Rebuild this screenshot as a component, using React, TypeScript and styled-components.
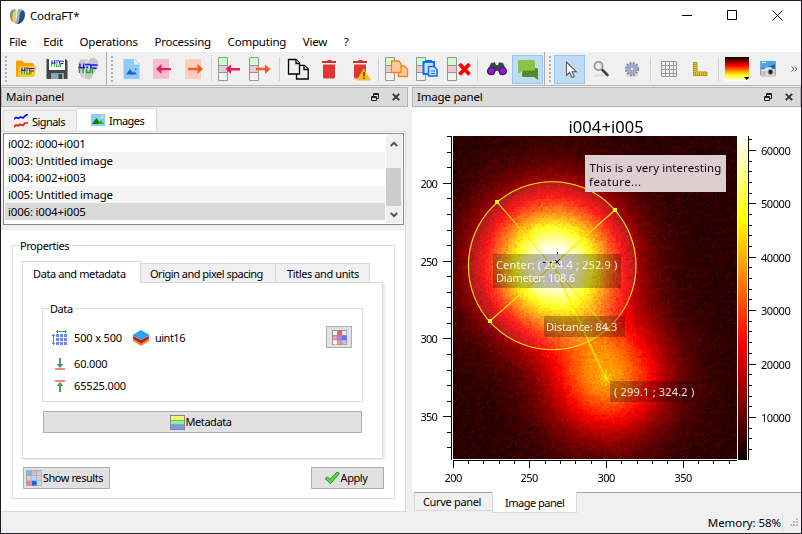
import React, { useLayoutEffect, useRef } from 'react';
import styled, { createGlobalStyle, css } from 'styled-components';

const Global = createGlobalStyle`
  * { box-sizing: border-box; }
  html, body { margin: 0; padding: 0; }
  body { width: 802px; height: 534px; overflow: hidden; background: #fff; }
`;

const small = css`
  font-size: 11px;
  letter-spacing: -0.43px;
`;

const Window = styled.div`
  display: flex;
  flex-direction: column;
  width: 802px;
  height: 534px;
  border: 1px solid #1e1c20;
  border-bottom-color: #26282b;
  background: #f0f0f0;
  color: #000;
  font: 11.5px/16px 'Noto Sans', 'Open Sans', sans-serif;
  letter-spacing: -0.2px;
  white-space: nowrap;
  overflow: hidden;
`;

/* ---------- title and menu ---------- */
const TitleBar = styled.header`
  display: flex;
  align-items: center;
  height: 30px;
  flex: none;
  padding: 0 18px 0 8px;
  background: #fff;
`;
const AppName = styled.span`
  flex: 1;
  padding: 0 0 0 4px;
`;
const WindowControls = styled.div`
  display: flex;
  gap: 34px;
  margin-top: -1px;
`;
const MenuBar = styled.nav`
  display: flex;
  align-items: center;
  gap: 16.6px;
  height: 21px;
  flex: none;
  padding: 0 0 0 8px;
  background: #fff;
`;
const MenuItem = styled.span``;

/* ---------- toolbars ---------- */
const ToolBars = styled.div`
  display: flex;
  flex: none;
  height: 34px;
  border-bottom: 1px solid #b3b3b3;
  background: #f0f0f0;
`;
const ToolGroup = styled.div<{ $w?: number }>`
  display: flex;
  align-items: center;
  ${p => (p.$w ? `width: ${p.$w}px;` : 'flex: 1;')}
  ${p => p.$w && 'border-right: 1px solid #adadad;'}
  padding-top: 1px;
`;
const Grip = styled.div`
  width: 9px;
  height: 26px;
  flex: none;
  background: radial-gradient(circle at 1px 1px, #b0b0b0 1px, transparent 1.3px) 4px 0 / 10px 4px repeat-y;
`;
const ToolButton = styled.div<{ $on?: boolean }>`
  display: flex;
  align-items: center;
  justify-content: center;
  width: 31px;
  height: 29px;
  flex: none;
  border: 1px solid ${p => (p.$on ? '#90c8f6' : 'transparent')};
  background: ${p => (p.$on ? '#c0dcf3' : 'transparent')};
`;
const Divider = styled.div<{ $w?: number }>`
  display: flex;
  justify-content: center;
  width: ${p => p.$w ?? 6}px;
  height: 24px;
  flex: none;
  &::after {
    content: '';
    width: 1px;
    background: #cfcfcf;
  }
`;
const Overflow = styled.span`
  display: flex;
  margin: 0 0 0 8px;
`;

/* ---------- docks ---------- */
const Docks = styled.main`
  display: grid;
  grid-template-columns: 407px 389px;
  column-gap: 4px;
  height: 425px;
  flex: none;
  padding-top: 1px;
`;
const Dock = styled.section`
  display: flex;
  flex-direction: column;
  min-width: 0;
`;
const DockTitle = styled.div`
  display: flex;
  align-items: center;
  gap: 12px;
  height: 20px;
  flex: none;
  padding: 0 7px 0 4px;
  border: 1px solid #b5b5b5;
  background: #dadada;
`;
const DockName = styled.span`
  flex: 1;
`;

const PanelTabs = styled.div`
  display: flex;
  align-items: flex-end;
  height: 23px;
  flex: none;
  padding: 0 0 0 2px;
  margin-top: 1px;
`;
const PanelTab = styled.div<{ $on?: boolean; $w: number }>`
  ${small}
  display: flex;
  align-items: center;
  gap: 4px;
  width: ${p => p.$w}px;
  height: ${p => (p.$on ? 23 : 21)}px;
  letter-spacing: -0.55px;
  padding: 1px 0 0 ${p => (p.$on ? 14 : 10)}px;
  border: 1px solid #d9d9d9;
  border-bottom: 0;
  ${p => p.$on && 'border-left: 0;'}
  background: ${p => (p.$on ? '#fff' : '#f0f0f0')};
`;
const PanelBody = styled.div`
  width: 405px;
  height: 381px;
  border: 1px solid #d9d9d9;
  border-left: 0;
  padding: 1px 1px 0 0;
  background: #fff;
`;
const ListFrame = styled.div`
  height: 97px;
  padding-left: 2px;
  background: #efefef;
`;
const ListBox = styled.div`
  display: flex;
  justify-content: space-between;
  width: 401px;
  height: 92px;
  padding: 1px 1px 1px 1px;
  border: 1px solid #828790;
  background: #fff;
`;
const Rows = styled.div`
  width: 380px;
`;
const Row = styled.div<{ $bg: string }>`
  height: 17px;
  padding-left: 3px;
  line-height: 17px;
  background: ${p => p.$bg};
`;
const ScrollBar = styled.div`
  display: flex;
  flex-direction: column;
  align-items: center;
  width: 16px;
  height: 88px;
  background: #f0f0f0;
`;
const ScrollArrow = styled.div`
  display: flex;
  align-items: center;
  justify-content: center;
  height: 17px;
`;
const Thumb = styled.div`
  width: 15px;
  height: 38px;
  margin-top: 16px;
  align-self: flex-start;
  background: #cdcdcd;
`;

/* ---------- properties ---------- */
const Group = styled.fieldset<{ $kind: 'outer' | 'inner' }>`
  ${small}
  display: flex;
  flex-direction: column;
  min-width: 0;
  margin: ${p => (p.$kind === 'outer' ? '7px 0 0 11px' : '0 0 0 19px')};
  width: ${p => (p.$kind === 'outer' ? 383 : 321)}px;
  height: ${p => (p.$kind === 'outer' ? 262 : 102)}px;
  padding: 0 9px;
  border: 1px solid #dcdcdc;
`;
const Legend = styled.legend`
  height: 17px;
  line-height: 17px;
  margin-left: -2px;
  padding: 0 2px 0 0;
`;
const OuterLegend = styled(Legend)`
  padding: 0 3px 0 0;
`;
const InnerTabs = styled.div`
  display: flex;
  align-items: flex-end;
  height: 20px;
  margin-top: 8px;
  flex: none;
`;
const InnerTab = styled.div<{ $on?: boolean; $w: number; $pad: number; $track?: number }>`
  width: ${p => p.$w}px;
  height: ${p => (p.$on ? 22 : 19)}px;
  ${p => p.$on && 'margin-bottom: -1px; z-index: 1;'}
  padding: ${p => (p.$on ? 4 : 2)}px 0 0 ${p => p.$pad}px;
  border: 1px solid #d9d9d9;
  border-bottom: 0;
  ${p => !p.$on && 'border-left: 0;'}
  background: ${p => (p.$on ? '#fff' : '#f0f0f0')};
  letter-spacing: ${p => p.$track ?? -0.4}px;
  line-height: 15px;
`;
const InnerPane = styled.div`
  display: flex;
  flex-direction: column;
  width: 361px;
  height: 177px;
  flex: none;
  padding-top: 17px;
  border: 1px solid #d9d9d9;
  box-shadow: 2px 1px 0 #efefef;
`;
const DataGrid = styled.div`
  display: flex;
  justify-content: space-between;
  padding-top: 9px;
`;
const Facts = styled.div`
  display: flex;
  flex-direction: column;
`;
const Fact = styled.div<{ $h: number }>`
  display: flex;
  align-items: center;
  height: ${p => p.$h}px;
`;
const FactIcon = styled.span`
  display: flex;
  justify-content: center;
  width: 16px;
  margin-right: 6px;
`;
const FactText = styled.span<{ $track?: number }>`
  letter-spacing: ${p => p.$track ?? -0.15}px;
  margin-right: 11px;
`;
const Button = styled.div<{ $w: number; $shift?: number }>`
  ${small}
  display: flex;
  align-items: center;
  justify-content: center;
  gap: 1px;
  width: ${p => p.$w}px;
  height: 22px;
  flex: none;
  padding-right: ${p => p.$shift ?? 0}px;
  border: 1px solid #adadad;
  background: #e1e1e1;
`;
const MetadataRow = styled.div`
  padding: 9px 0 0 20px;
`;
const Actions = styled.div`
  display: flex;
  justify-content: space-between;
  padding: 8px 1px 0 1px;
`;
const TableButton = styled(Button)`
  margin-right: 1px;
`;

/* ---------- plot ---------- */
const Plot = styled.div`
  display: grid;
  width: 389px;
  height: 384px;
  margin-top: 1px;
  flex: none;
  background: #fff;
  > * { grid-area: 1 / 1; }
`;
const Heat = styled.canvas`
  display: block;
  margin: 28px 0 0 41px;
`;
const Overlay = styled.svg`
  display: block;
  z-index: 1;
`;
const BottomTabs = styled.div`
  display: flex;
  align-items: flex-start;
  height: 21px;
  flex: none;
  padding-left: 2px;
`;
const BottomTab = styled.div<{ $on?: boolean; $w: number }>`
  ${small}
  width: ${p => p.$w}px;
  height: ${p => (p.$on ? 21 : 19)}px;
  padding: ${p => (p.$on ? 3 : 1)}px 0 0 ${p => (p.$on ? 12 : 8)}px;
  border: 1px solid #d9d9d9;
  border-top: ${p => (p.$on ? '0' : '1px solid #a0a0a0')};
  ${p => !p.$on && 'border-right: 0;'}
  background: ${p => (p.$on ? '#fff' : '#f0f0f0')};
  letter-spacing: ${p => (p.$on ? -0.5 : -0.33)}px;
`;
const TabFill = styled.div`
  flex: 1;
  height: 1px;
  background: #a0a0a0;
`;
const StatusBar = styled.footer`
  display: flex;
  flex: 1;
  align-items: center;
  justify-content: flex-end;
  padding: 0 2px 0 0;
`;
const Memory = styled.span`
  padding: 2px 1px 0 0;
  border-right: 1px solid #d9d9d9;
  margin-right: 6px;
  letter-spacing: -0.08px;
`;

/* ---------- icons ---------- */
const Hdf = ({ x, y, s = 1 }: { x: number; y: number; s?: number }) => (
  <g transform={`translate(${x} ${y}) scale(${s})`} fill="none" strokeWidth="1.500">
    <path d="M1.500 0v5M5.500 0v5M0 4.500h7M7 1h5.500M9 3v2M13 1v4M13.500 1.500H20M14 5h5" stroke="#1414ee" />
    <path d="M1 5v5M5 5v5M8.500 5.500v4h3.500L13 5M14.500 5v5.500" stroke="#21a336" />
  </g>
);
const Logo = () => (
  <svg width="17" height="17" viewBox="0 0 17 17">
    <path d="M1 5Q2 1 5.500 1.200Q8 2 6.500 5L5.500 12Q5 15 3 13.500Q0 10 1 5" fill="#7d93ad" />
    <path d="M4 5Q5 2 8 3Q6.800 6 7 11Q7 14 5 15Q2 12 4 5" fill="#f3d04c" />
    <path d="M9 1Q13 0 13.500 2.500Q10.500 6 10.500 10Q10 14 8 16Q5.500 16 6 14Q8 11 8 6Z" fill="#a3afbd" />
    <path d="M14 2Q17 4 15.500 10Q13 16 8 16Q10.500 13 10.500 8Q11 3 14 2" fill="#234b8f" />
  </svg>
);
const FolderIcon = () => (
  <svg width="24" height="24" viewBox="0 0 24 24">
    <path d="M2 5q0-1.500 1.500-1.500H8L10.500 6H18q2 0 2 2v12H2z" fill="#ffa000" />
    <path d="M5 10q.4-1 1.500-1H21q1.500 0 1.300 1.500L20.500 19q-.3 1-1.500 1H3.200z" fill="#ffca28" />
    <Hdf x={7} y={10.5} s={0.68} />
  </svg>
);
const SaveIcon = () => (
  <svg width="24" height="24" viewBox="0 0 24 24">
    <path d="M1.500 2h19L22.500 4v18h-21z" fill="#454545" />
    <path d="M4 2h16v11H4z" fill="#fff" />
    <Hdf x={6} y={3.2} s={0.66} />
    <path d="M6 16h13v6H6z" fill="#90a4ae" />
    <path d="M13.500 17h3.500v5h-3.500z" fill="#37474f" />
  </svg>
);
const HdfIcon = () => (
  <svg width="24" height="24" viewBox="0 0 24 24">
    <path d="M2 11Q1 3 7 2Q12 1 12 5Q14 0 18 1Q24 3 22 10Q20 14 17 17Q16 24 11 22Q4 22 2 11" fill="#c9c9c9" />
    <path d="M7 2Q12 2 10 9Q7 15 9 22" fill="none" stroke="#e7e7e7" />
    <Hdf x={2.5} y={6.5} s={0.95} />
  </svg>
);
const ImageFileIcon = () => (
  <svg width="24" height="24" viewBox="0 0 24 24">
    <path d="M3.500 2h10.800L19.500 7v15h-16z" fill="#90caf9" />
    <path d="M14 2.200V7.500h5.200z" fill="#e1f5fe" />
    <path d="M6 17.500L10 12l4 5.500z" fill="#1565c0" />
    <path d="M11.500 17.500l3-3.500 2.500 3.500z" fill="#1976d2" />
    <path d="M15 11.500h1.500V13h-1.500z" fill="#1976d2" />
  </svg>
);
const ArrowBox = ({ back }: { back?: boolean }) => (
  <svg width="24" height="24" viewBox="0 0 24 24">
    <path d={back ? 'M2 2h16v20H2z' : 'M3 2h16v20H3z'} fill={back ? '#f8bbd0' : '#ffccbc'} />
    {back ? (
      <path d="M5 12l5.500-5v4H20v2.300h-9.500V17z" fill="#e91e63" />
    ) : (
      <path d="M21 12l-5.500-5v3.700H6v2.600h9.500V17z" fill="#ff5722" />
    )}
  </svg>
);
const CellsIcon = ({ children }: { children: React.ReactNode }) => (
  <svg width="24" height="24" viewBox="0 0 24 24">
    <g stroke="#959595">
      <path d="M.500.500h9v8h-9z" fill="#ccffcc" />
      <path d="M.500 8.500h9v7h-9z" fill="#e9cccc" />
      <path d="M.500 15.500h9v8h-9z" fill="#f2f2f2" />
    </g>
    {children}
  </svg>
);
const CopyIcon = () => (
  <svg width="24" height="24" viewBox="0 0 24 24" fill="#f0f0f0" stroke="#000" strokeWidth="1.300">
    <path d="M10.500 9.500V22h11.700v-10L18.500 8.300H10.500z" />
    <path d="M18 8.500v4h4" />
    <path d="M2.500 2.500v14.500h11V6L10 2.500z" />
    <path d="M10 2.500v4h3.500" />
  </svg>
);
const TrashIcon = ({ warn }: { warn?: boolean }) => (
  <svg width="24" height="24" viewBox="0 0 24 24">
    <path d="M6 7.500h12V20q0 1.500-1.500 1.500h-9q-1.500 0-1.500-1.500z" fill="#e23432" />
    <path d="M5 4h5l1-1h3l1 1h4v2H5z" fill="#d32f2f" />
    {warn && (
      <g>
        <path d="M15.700 11.500L23 23.500H8.500z" fill="#ffc107" />
        <path d="M15.200 15h1.500v4.500h-1.500zM15.200 20.500h1.500V22h-1.500z" fill="#4e342e" />
      </g>
    )}
  </svg>
);
const BinocularsIcon = () => (
  <svg width="24" height="24" viewBox="0 0 24 24">
    <path d="M6 6l4-.8L11 8h2l1-2.800 4 .8 4 8.500q0 3-4 3.500h-3l-1.500-4h-3L9 18H6q-4-.500-4-3.500z" fill="#37474f" />
    <circle cx="6.300" cy="14" r="4.200" fill="#263238" /><circle cx="17.700" cy="14" r="4.200" fill="#263238" />
    <circle cx="6.300" cy="14" r="3" fill="#aa00ff" /><circle cx="17.700" cy="14" r="3" fill="#aa00ff" />
  </svg>
);
const ChatIcon = () => (
  <svg width="24" height="24" viewBox="0 0 24 24">
    <path d="M6.500 11h14q1.500 0 1.500 1.500V23l-4-3H7.500q-1.500 0-1.500-1.500z" fill="#558b2f" />
    <path d="M3.500 3h14Q19 3 19 4.500V12q0 1.500-1.500 1.500h-11L2 17V4.500Q2 3 3.500 3" fill="#8bc34a" />
  </svg>
);
const PointerIcon = () => (
  <svg width="24" height="24" viewBox="0 0 24 24">
    <path d="M8.500 5v13.500l3-3 2.500 5 2.400-1.200-2.300-4.600h4.200z" fill="#fff" stroke="#585868" strokeWidth="1.100" />
  </svg>
);
const ZoomIcon = () => (
  <svg width="24" height="24" viewBox="0 0 24 24">
    <ellipse cx="11" cy="18.500" rx="6" ry="1.300" fill="#dedede" />
    <path d="M13 12.500l5.500 5.500" stroke="#444" strokeWidth="2.600" strokeLinecap="round" />
    <circle cx="9.500" cy="9" r="4.100" fill="#e6e9ec" stroke="#969696" strokeWidth="1.700" />
  </svg>
);
const GearIcon = () => (
  <svg width="24" height="24" viewBox="0 0 24 24">
    <ellipse cx="12" cy="18.800" rx="6" ry="1" fill="#d2d2d2" />
    <circle cx="12" cy="12" r="5.800" fill="none" stroke="#7f87a0" strokeWidth="2.600" strokeDasharray="1.900 1.137" />
    <circle cx="12" cy="12" r="4" fill="none" stroke="#a0a8c4" strokeWidth="3" />
    <circle cx="12" cy="12" r="2.100" fill="#e6e8f2" stroke="#7279a0" strokeWidth=".9" />
  </svg>
);
const GridIcon = () => (
  <svg width="24" height="24" viewBox="0 0 24 24" fill="none" stroke="#999">
    <path d="M4.500 4.500h15v15h-15zM8.500 4.500v15M12.500 4.500v15M16.500 4.500v15M4.500 8.500h15M4.500 12.500h15M4.500 16.500h15" />
  </svg>
);
const RulerIcon = () => (
  <svg width="24" height="24" viewBox="0 0 24 24">
    <path d="M5.500 5.500h3.500v9.500h10v3.500H5.500z" fill="#e3bf3a" stroke="#b8901a" />
    <path d="M7 7v10h11" fill="none" stroke="#a07d10" strokeDasharray="1 1" />
  </svg>
);
const ColormapIcon = () => (
  <svg width="24" height="24" viewBox="0 0 24 24">
    <defs>
      <linearGradient id="cm" x2="0" y2="1">
        <stop offset="0" stopColor="#0a0000" /><stop offset=".36" stopColor="#f00" />
        <stop offset=".75" stopColor="#ff0" /><stop offset="1" stopColor="#fff" />
      </linearGradient>
    </defs>
    <path d="M0 0h24v24H0z" fill="url(#cm)" />
    <path d="M19 20h5.500l-2.700 3z" />
  </svg>
);
const CameraIcon = () => (
  <svg width="24" height="24" viewBox="0 0 24 24">
    <path d="M4.500 4h15v14h-15z" fill="#1769b5" />
    <path d="M4.500 4h15v3L4.500 12z" fill="#4aa6e6" />
    <path d="M5 12h3.500l1.500-2h5l1.500 2h2.500v7H5z" fill="#e6e6e6" stroke="#9b9b9b" strokeWidth=".6" />
    <path d="M5 14h5v4H5z" fill="#c3c3c3" />
    <circle cx="14.500" cy="15" r="3" fill="#999" /><circle cx="14.500" cy="15" r="1.900" fill="#1a1a1a" />
    <path d="M6 5h4v1H6z" fill="#fff" />
  </svg>
);
const RestoreIcon = () => (
  <svg width="9" height="9" viewBox="0 0 9 9" fill="none" stroke="#222">
    <path d="M2.500 3V.500h5v5H6M2 1.500h6" /><path d="M.500 3.500h5v4h-5zM0 4.500h6" />
  </svg>
);
const CloseIcon = () => (
  <svg width="8" height="8" viewBox="0 0 8 8"><path d="M.8 .8l6.400 6.400M7.200 .8L.8 7.200" stroke="#333" strokeWidth="1.900" /></svg>
);
const SignalsIcon = () => (
  <svg width="14" height="15" viewBox="0 0 14 15" fill="none" strokeWidth="1.700">
    <path d="M0 5l2-1.500 2 .8L7 3l2 1 2-2 3-2" stroke="#1111f0" />
    <path d="M0 13l2-2 2 .8L6 10.500l3 .8 2-2.300h3" stroke="#ee1111" />
  </svg>
);
const ImagesIcon = () => (
  <svg width="14" height="14" viewBox="0 0 14 14">
    <path d="M0 0h14v12H0z" fill="#90caf9" /><path d="M1 10l4.500-6L10 10z" fill="#087f08" />
    <path d="M7 10l3-4 3 4z" fill="#18c818" /><path d="M10 1.500h2.500V4H10z" fill="#f4f12a" />
  </svg>
);
const Chevron = ({ down }: { down?: boolean }) => (
  <svg width="8" height="6" viewBox="0 0 8 6">
    <path d={down ? 'M.8 1L4 4.200 7.200 1' : 'M.8 5L4 1.800 7.200 5'} fill="none" stroke="#505050" strokeWidth="2" />
  </svg>
);
const ShapeIcon = () => (
  <svg width="16" height="16" viewBox="0 0 16 16">
    <path d="M4 4h3v3H4zM8 4h3v3H8zM12 4h3v3h-3zM4 8h3v3H4zM8 8h3v3H8zM12 8h3v3h-3zM4 12h3v3H4zM8 12h3v3H8zM12 12h3v3h-3z" fill="#6b85ff" />
    <path d="M4 1.500h11M5.500 0v3M13.500 0v3M1.500 4v11M0 5.500h3M0 13.500h3" stroke="#4c9c5c" />
  </svg>
);
const LayersIcon = () => (
  <svg width="16" height="16" viewBox="0 0 16 16">
    <path d="M0 8l8 4.500L16 8v3l-8 5-8-5z" fill="#ec8b2c" />
    <path d="M0 6l8 4 8-4v2.500l-8 5-8-5z" fill="#c4161c" />
    <path d="M8 0l8 4.800v1L8 10 0 5.800v-1z" fill="#27a3ea" />
  </svg>
);
const LimitIcon = ({ max }: { max?: boolean }) => (
  <svg width="10" height="12" viewBox="0 0 10 12">
    <path d={max ? 'M0 1h10' : 'M0 11h10'} stroke="#ff8080" strokeWidth="2" />
    <path d={max ? 'M5 2l3.500 4H6v6H4V6H1.500z' : 'M5 10L8.500 6H6V0H4v6H1.500z'} fill="#4c9c5c" />
  </svg>
);
const Swatches = ({ colors, size, line }: { colors: string[]; size: number; line: string }) => (
  <svg width={size} height={size} viewBox="0 0 16 16">
    <path d="M0 0h16v16H0z" fill={line} />
    {colors.map((c, i) => (
      <rect key={i} x={1 + (i % 3) * 5} y={1 + Math.floor(i / 3) * 5} width="4.400" height="4.400" fill={c} />
    ))}
  </svg>
);
const MetaIcon = () => (
  <svg width="15" height="15" viewBox="0 0 15 15">
    <path d="M0 0h15v15H0z" fill="#888" />
    <path d="M1 1h13v4H1z" fill="#fff56b" /><path d="M1 5h13v5H1z" fill="#7dff8c" />
    <path d="M1 10h13v4H1z" fill="#8590ff" />
    <path d="M1 5.500h13M1 9.500h13" stroke="#79b58c" />
  </svg>
);
const CheckIcon = () => (
  <svg width="16" height="14" viewBox="0 0 16 14">
    <path d="M1 7.500L3.500 6 6 8.500 13 1l2.300 1.500L6.500 12.500z" fill="#5ae04b" stroke="#208a1b" />
  </svg>
);
const ResizeGrip = () => (
  <svg width="10" height="9" viewBox="0 0 10 9">
    <path d="M7 0h2v2H7zM4 3h2v2H4zM7 3h2v2H7zM1 6h2v2H1zM4 6h2v2H4zM7 6h2v2H7z" fill="#bfbfbf" />
  </svg>
);

/* ---------- image data ---------- */
const hot = (v: number): [number, number, number] => {
  const c = (t: number) => Math.round(255 * Math.max(0, Math.min(1, t)));
  return [c(0.0416 + (0.9584 * v) / 0.365), c((v - 0.365) / 0.381), c((v - 0.746) / 0.254)];
};
const noise = (x: number, y: number) => {
  let h = Math.imul(x, 374761393) ^ Math.imul(y, 668265263);
  h = Math.imul(h ^ (h >>> 13), 1274126177);
  h = Math.imul(h ^ (h >>> 16), 2246822519);
  return ((h ^ (h >>> 15)) >>> 0) / 4294967296;
};
const gauss = (dx: number, dy: number, s: number) => Math.exp(-(dx * dx + dy * dy) / (2 * s * s));

const HeatMap = () => {
  const ref = useRef<HTMLCanvasElement>(null);
  useLayoutEffect(() => {
    const ctx = ref.current!.getContext('2d')!;
    const img = ctx.createImageData(284, 323);
    for (let j = 0; j < 323; j++)
      for (let i = 0; i < 284; i++) {
        const x = Math.floor(199.7 + i / 1.533);
        const y = Math.floor(169.6 + j / 1.555);
        const n = 4900 + (noise(x, y) + noise(x + 911, y + 577) - 1) * 2900;
        const value = n + 60500 * gauss(x - 264.4, y - 252, 29.5) + 32500 * gauss(x - 300, y - 324.2, 26.5);
        const [r, g, b] = hot((value - 2040) / 60675);
        img.data.set([r, g, b, 255], (j * 284 + i) * 4);
      }
    ctx.putImageData(img, 0, 0);
  }, []);
  return <Heat ref={ref} width={284} height={323} />;
};

const range = (a: number, b: number, s: number) =>
  Array.from({ length: Math.floor((b - a) / s) + 1 }, (_, i) => a + i * s);
const px = (v: number) => Math.floor(453.1 + (v - 200) * 1.533) + 0.5;
const py = (v: number) => Math.floor(183.4 + (v - 200) * 1.555) + 0.5;
const pz = (v: number) => Math.floor(417.4 - ((v - 10000) * 53.4) / 10000) + 0.5;

const PlotOverlay = () => (
  <Overlay width="389" height="384" viewBox="412 108 389 384" fontSize="11">
    <defs>
      <linearGradient id="bar" x1="0" y1="1" x2="0" y2="0">
        <stop offset="0" stopColor="#0b0000" /><stop offset=".365" stopColor="#f00" />
        <stop offset=".746" stopColor="#ff0" /><stop offset="1" stopColor="#fff" />
      </linearGradient>
      <clipPath id="area"><path d="M453 136h284v323H453z" /></clipPath>
    </defs>
    <g clipPath="url(#area)">
      <ellipse cx="552.200" cy="265.700" rx="83.800" ry="84" fill="rgba(255,255,255,.1)" stroke="#ffe800" strokeWidth="1.100" />
      <path d="M497 202L607 329M615 210L490 321" stroke="#ffe800" strokeWidth="1.100" />
      <path d="M552 263L606 378.500" stroke="#fff000" strokeWidth="1.400" />
      <path d="M495 200h4v4h-4zM613 208h4v4h-4zM488 319h4v4h-4zM605 327h4v4h-4z" fill="#ff0" />
      <path d="M606 369v17M600 379h12M601 374l10 10M611 374l-10 10M576 318l9 9M585 317l-9 9" stroke="#e9ef10" />
      <path d="M557.500 252v2M543 262.500h3M555 260l5 5M560 259l-4 4M549 262.500h3M557.500 266v1" stroke="#111" />
      <path d="M493 254h128v34H493zM544 316h81v21h-81zM610 381h84v21h-84z" fill="rgba(0,0,0,.27)" />
      <path d="M585 155h141v37H585z" fill="#dccfd1" />
    </g>
    <text x="589.500" y="172" fontSize="11.500" textLength="131.500" fill="#100010">This is a very interesting</text>
    <text x="589" y="186" fontSize="11.500" textLength="52" fill="#100010">feature...</text>
    <g fill="#fff" fillOpacity=".9">
      <text x="496" y="269" textLength="121">Center: ( 264.4 ; 252.9 )</text>
      <text x="496" y="282" textLength="79">Diameter: 108.6</text>
      <text x="546" y="331" textLength="71">Distance: 84.3</text>
      <text x="614" y="396" textLength="80">( 299.1 ; 324.2 )</text>
    </g>
    <text x="568.500" y="133" fontSize="16.500" textLength="75">i004+i005</text>

    <path d="M738 136h9v324h-9z" fill="url(#bar)" />
    <path d="M451.500 136v324M453 460.500h284M748.500 136v324" stroke="#000" fill="none" />
    {range(170, 370, 10).map(v => (
      <path key={v} d={`M451 ${py(v)}H${v % 50 ? 447 : 443}`} stroke="#000" />
    ))}
    {range(200, 380, 10).map(v => (
      <path key={v} d={`M${px(v)} 460V${v % 50 ? 464 : 468}`} stroke="#000" />
    ))}
    {range(4000, 62000, 2000).map(v => (
      <path key={v} d={`M749 ${pz(v)}H${v % 10000 ? 752 : 756}`} stroke="#000" />
    ))}
    {[200, 250, 300, 350].map(v => (
      <g key={v}>
        <text x="420.500" y={py(v) + 4} textLength="17">{v}</text>
        <text x={px(v) - 9} y="482" textLength="17.500">{v}</text>
      </g>
    ))}
    {range(10000, 60000, 10000).map(v => (
      <text key={v} x="761" y={pz(v) + 4} textLength="29.500">{v}</text>
    ))}
  </Overlay>
);

const items = ['i002: i000+i001', 'i003: Untitled image', 'i004: i002+i003', 'i005: Untitled image', 'i006: i004+i005'];
const menus = ['File', 'Edit', 'Operations', 'Processing', 'Computing', 'View', '?'];

export default function App() {
  return (
    <Window>
      <Global />
      <TitleBar>
        <Logo />
        <AppName>CodraFT*</AppName>
        <WindowControls>
          <svg width="11" height="11" stroke="#000"><path d="M0 5.500h10" /></svg>
          <svg width="11" height="11" stroke="#000" fill="none"><path d="M.500 .500h9v9h-9z" /></svg>
          <svg width="11" height="11" stroke="#000"><path d="M.500 .500l10 10M10.500 .500l-10 10" /></svg>
        </WindowControls>
      </TitleBar>
      <MenuBar>{menus.map(m => <MenuItem key={m}>{m}</MenuItem>)}</MenuBar>

      <ToolBars>
        <ToolGroup $w={106}>
          <Grip />
          <ToolButton><FolderIcon /></ToolButton>
          <ToolButton><SaveIcon /></ToolButton>
          <ToolButton><HdfIcon /></ToolButton>
        </ToolGroup>
        <ToolGroup $w={438}>
          <Grip />
          <ToolButton><ImageFileIcon /></ToolButton>
          <ToolButton><ArrowBox back /></ToolButton>
          <ToolButton><ArrowBox /></ToolButton>
          <Divider $w={5} />
          <ToolButton><CellsIcon><path d="M7.500 12l5.500-4.500v3.500h9v2.500h-9V17z" fill="#e91e63" /></CellsIcon></ToolButton>
          <ToolButton><CellsIcon><path d="M21.500 12l-5.500-4.500v3.200H7v2.600h9V17z" fill="#ff5722" /></CellsIcon></ToolButton>
          <Divider />
          <ToolButton><CopyIcon /></ToolButton>
          <ToolButton><TrashIcon /></ToolButton>
          <ToolButton><TrashIcon warn /></ToolButton>
          <Divider />
          <ToolButton>
            <CellsIcon>
              <g fill="#ffcc99" stroke="#f58220" strokeWidth="1.300">
                <path d="M13.500 9h6l3 3v7.500h-9z" /><path d="M6.500 4h7.500l2 2.500V15.500h-9.500z" />
              </g>
            </CellsIcon>
          </ToolButton>
          <ToolButton>
            <CellsIcon>
              <path d="M7.500 5h10.500v12h-10.500z" fill="#cfe2fb" stroke="#0d6efd" strokeWidth="2" />
              <path d="M10 3h6v3h-6z" fill="#0d6efd" />
              <path d="M12.500 9.500h5.500l3 3v6.500h-8.500z" fill="#cfe2fb" stroke="#0d6efd" strokeWidth="1.500" />
              <path d="M15 14h4M15 16.500h4" stroke="#0d6efd" />
            </CellsIcon>
          </ToolButton>
          <ToolButton><CellsIcon><path d="M12.500 7l10 10.500M22.500 7l-10 10.500" stroke="#f00" strokeWidth="3.800" /></CellsIcon></ToolButton>
          <Divider $w={7} />
          <ToolButton><BinocularsIcon /></ToolButton>
          <ToolButton $on><ChatIcon /></ToolButton>
        </ToolGroup>
        <ToolGroup>
          <Grip />
          <ToolButton $on><PointerIcon /></ToolButton>
          <ToolButton><ZoomIcon /></ToolButton>
          <ToolButton><GearIcon /></ToolButton>
          <Divider />
          <ToolButton><GridIcon /></ToolButton>
          <ToolButton><RulerIcon /></ToolButton>
          <Divider />
          <ToolButton><ColormapIcon /></ToolButton>
          <ToolButton><CameraIcon /></ToolButton>
          <Overflow>
            <svg width="7" height="6" fill="none" stroke="#555"><path d="M.5 .5L3 3 .5 5.500M3.500 .5L6 3 3.500 5.500" /></svg>
          </Overflow>
        </ToolGroup>
      </ToolBars>

      <Docks>
        <Dock>
          <DockTitle><DockName>Main panel</DockName><RestoreIcon /><CloseIcon /></DockTitle>
          <PanelTabs>
            <PanelTab $w={74}><SignalsIcon />Signals</PanelTab>
            <PanelTab $w={80} $on><ImagesIcon />Images</PanelTab>
          </PanelTabs>
          <PanelBody>
            <ListFrame>
              <ListBox>
                <Rows>
                  {items.map((t, i) => (
                    <Row key={t} $bg={i === 4 ? '#d9d9d9' : i % 2 ? '#f5f5f5' : '#fff'}>{t}</Row>
                  ))}
                </Rows>
                <ScrollBar>
                  <ScrollArrow><Chevron /></ScrollArrow>
                  <Thumb />
                  <ScrollArrow><Chevron down /></ScrollArrow>
                </ScrollBar>
              </ListBox>
            </ListFrame>
            <Group $kind="outer">
              <OuterLegend>Properties</OuterLegend>
              <InnerTabs>
                <InnerTab $on $w={119} $pad={10}>Data and metadata</InnerTab>
                <InnerTab $w={135} $pad={9} $track={-0.5}>Origin and pixel spacing</InnerTab>
                <InnerTab $w={94} $pad={11}>Titles and units</InnerTab>
              </InnerTabs>
              <InnerPane>
                <Group $kind="inner">
                  <Legend>Data</Legend>
                  <DataGrid>
                    <Facts>
                      <Fact $h={24}>
                        <FactIcon><ShapeIcon /></FactIcon><FactText>500 x 500</FactText>
                        <FactIcon><LayersIcon /></FactIcon><FactText $track={-0.5}>uint16</FactText>
                      </Fact>
                      <Fact $h={28}><FactIcon><LimitIcon /></FactIcon><FactText>60.000</FactText></Fact>
                      <Fact $h={16}><FactIcon><LimitIcon max /></FactIcon><FactText>65525.000</FactText></Fact>
                    </Facts>
                    <TableButton $w={26}>
                      <Swatches size={15} line="#8d8d99" colors={['#fff', '#ff5c5c', '#f2f2ff', '#ff9494', '#8f8fff', '#6b6bff', '#fff', '#ff9494', '#c2c2ff']} />
                    </TableButton>
                  </DataGrid>
                </Group>
                <MetadataRow><Button $w={319} $shift={4}><MetaIcon />Metadata</Button></MetadataRow>
              </InnerPane>
              <Actions>
                <Button $w={87} $shift={4}>
                  <Swatches size={16} line="#a8a8a8" colors={['#80b3ff', '#e9b3b3', '#b3d1ff', '#e9c9c9', '#b3d1ff', '#e9c9c9', '#ff8080', '#0066ff', '#b0e0e8']} />
                  Show results
                </Button>
                <Button $w={73} $shift={4}><CheckIcon />Apply</Button>
              </Actions>
            </Group>
          </PanelBody>
        </Dock>
        <Dock>
          <DockTitle><DockName>Image panel</DockName><RestoreIcon /><CloseIcon /></DockTitle>
          <Plot><HeatMap /><PlotOverlay /></Plot>
          <BottomTabs>
            <BottomTab $w={78}>Curve panel</BottomTab>
            <BottomTab $w={85} $on>Image panel</BottomTab>
            <TabFill />
          </BottomTabs>
        </Dock>
      </Docks>
      <StatusBar><Memory>Memory: 58%</Memory><ResizeGrip /></StatusBar>
    </Window>
  );
}
